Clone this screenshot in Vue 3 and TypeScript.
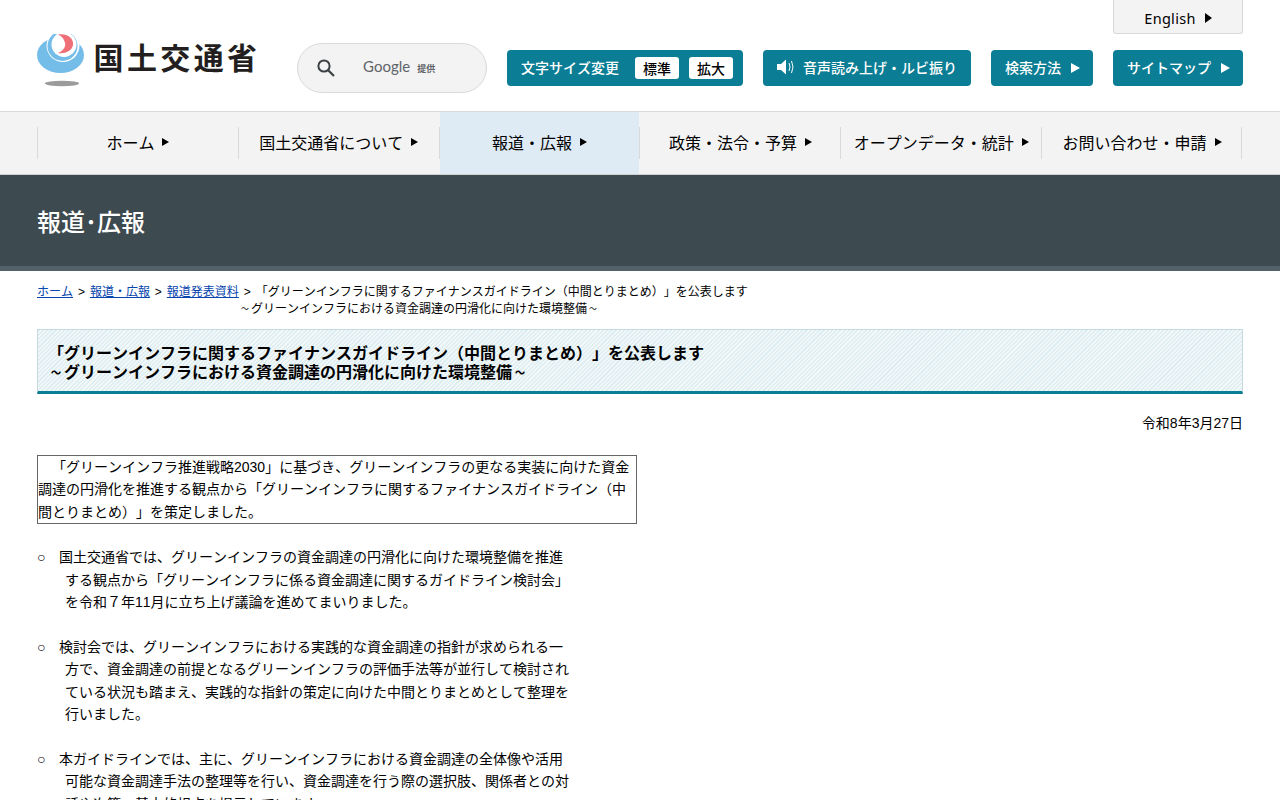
<script setup lang="ts">
const navItems = [
  { label: 'ホーム', active: false },
  { label: '国土交通省について', active: false },
  { label: '報道・広報', active: true },
  { label: '政策・法令・予算', active: false },
  { label: 'オープンデータ・統計', active: false },
  { label: 'お問い合わせ・申請', active: false },
]
const items = [
  ['国土交通省では、グリーンインフラの資金調達の円滑化に向けた環境整備を推進', 'する観点から「グリーンインフラに係る資金調達に関するガイドライン検討会」', 'を令和７年11月に立ち上げ議論を進めてまいりました。'],
  ['検討会では、グリーンインフラにおける実践的な資金調達の指針が求められる一', '方で、資金調達の前提となるグリーンインフラの評価手法等が並行して検討され', 'ている状況も踏まえ、実践的な指針の策定に向けた中間とりまとめとして整理を', '行いました。'],
  ['本ガイドラインでは、主に、グリーンインフラにおける資金調達の全体像や活用', '可能な資金調達手法の整理等を行い、資金調達を行う際の選択肢、関係者との対', '話や次第、基本的視点を提示しています。'],
]
</script>

<template>
  <div class="page" lang="ja">
    <header class="header">
      <div class="logo">
        <svg class="mark" width="48" height="53" viewBox="0 0 48 53" aria-hidden="true">
          <ellipse cx="23.5" cy="21" rx="23.5" ry="18" fill="#74bde9" />
          <circle cx="26" cy="11.5" r="16.5" fill="#fff" />
          <circle cx="25.5" cy="12" r="15" fill="#74bde9" />
          <circle cx="27" cy="10.5" r="12.5" fill="#fff" />
          <path d="M21 0.5 C30 -1 37 4 36 11 C35 17 28 20 21 19 C26 17 29 13 28 9 C27 5 25 2 21 0.5Z" fill="#ee6f77" />
          <ellipse cx="25" cy="49.5" rx="17" ry="2.7" fill="#9b9b9b" />
        </svg>
        <span class="logo-text">国土交通省</span>
      </div>

      <div class="search">
        <svg width="20" height="20" viewBox="0 0 20 20" aria-hidden="true">
          <circle cx="8" cy="8" r="5.6" fill="none" stroke="#3c4043" stroke-width="2" />
          <path d="M12.2 12.2 L18 18" stroke="#3c4043" stroke-width="2.2" />
        </svg>
        <span class="google">Google</span>
        <span class="provided">提供</span>
      </div>

      <div class="header-right">
        <a class="english">English<i class="arrow dark"></i></a>
        <div class="tools">
          <div class="tool size">
            <span>文字サイズ変更</span>
            <b class="chip first">標準</b>
            <b class="chip">拡大</b>
          </div>
          <a class="tool voice">
            <svg width="19" height="18" viewBox="0 0 19 18" aria-hidden="true">
              <path d="M1 6 H5 L10 1.5 V16.5 L5 12 H1Z" fill="#fff" />
              <path d="M13 5 Q15 9 13 13 M15.5 3 Q18.5 9 15.5 15" fill="none" stroke="#fff" stroke-width="1" />
            </svg>
            <span>音声読み上げ・ルビ振り</span>
          </a>
          <a class="tool method">検索方法<i class="arrow"></i></a>
          <a class="tool sitemap">サイトマップ<i class="arrow"></i></a>
        </div>
      </div>
    </header>

    <nav class="nav">
      <ul class="nav-list">
        <li v-for="item in navItems" :key="item.label" class="nav-item" :class="{ active: item.active }">
          <span class="nav-label">{{ item.label }}</span><i class="arrow dark small"></i>
        </li>
      </ul>
    </nav>

    <div class="band"><h2>報道･広報</h2></div>

    <main class="main">
      <div class="crumbs">
        <a href="#">ホーム</a> &gt; <a href="#">報道・広報</a> &gt; <a href="#">報道発表資料</a> &gt; 「グリーンインフラに関するファイナンスガイドライン（中間とりまとめ）」を公表します
        <span class="crumb-sub"><span class="tilde">～</span>グリーンインフラにおける資金調達の円滑化に向けた環境整備<span class="tilde">～</span></span>
      </div>

      <h1 class="title">「グリーンインフラに関するファイナンスガイドライン（中間とりまとめ）」を公表します<br /><span class="tilde">～</span>グリーンインフラにおける資金調達の円滑化に向けた環境整備<span class="tilde">～</span></h1>

      <p class="date">令和8年3月27日</p>

      <div class="lead">　「グリーンインフラ推進戦略2030」に基づき、グリーンインフラの更なる実装に向けた資金調達の円滑化を推進する観点から「グリーンインフラに関するファイナンスガイドライン（中間とりまとめ）」を策定しました。</div>

      <section class="points">
        <div v-for="(lines, i) in items" :key="i" class="point">
          <span class="bullet">○</span>
          <div class="point-text">
            <div v-for="(line, j) in lines" :key="j" :class="{ cont: j > 0 }">{{ line }}</div>
          </div>
        </div>
      </section>
    </main>
  </div>
</template>

<style>
html, body { margin: 0; background: #fff; overflow: hidden; }
</style>

<style scoped>
.page { width: 1280px; height: 800px; overflow: hidden; font-family: "Liberation Sans", "Noto Sans CJK JP", sans-serif; color: #000; text-spacing-trim: space-all; font-kerning: none; }
.tilde { display: inline-block; width: 1em; text-align: center; transform: scale(0.65, 0.8); }
.header { height: 111px; display: flex; padding-left: 37px; box-sizing: border-box; }
.logo { width: 260px; flex: none; display: flex; align-items: flex-start; padding-top: 34px; box-sizing: border-box; }
.mark { flex: none; margin-right: 8.5px; }
.logo-text { font-family: "Noto Sans CJK JP", sans-serif; font-size: 30px; line-height: 46px; letter-spacing: 3.4px; margin-top: -1px; color: #231f20; white-space: nowrap; font-weight: 700; }
.search { margin-top: 43px; width: 190px; height: 50px; box-sizing: border-box; border: 1px solid #d9d9d9; border-radius: 25px; background: #f3f3f3; display: flex; align-items: center; padding-left: 18px; flex: none; }
.google { font-family: "Lato", sans-serif; font-size: 15px; color: #5f6368; margin-left: 27px; margin-top: -4px; }
.provided { font-family: "Noto Sans CJK JP", sans-serif; font-size: 9px; font-weight: 700; color: #5f6368; margin-left: 7px; }
.header-right { flex: 1; padding-right: 37px; display: flex; flex-direction: column; align-items: flex-end; margin-left: 20px; }
.english { width: 130px; height: 34px; box-sizing: border-box; background: #f3f3f3; border: 1px solid #d9d9d9; border-top: 0; border-radius: 0 0 3px 3px; display: flex; align-items: center; justify-content: center; font-family: "Noto Sans", sans-serif; font-size: 14.5px; letter-spacing: 0.3px; color: #000; padding-top: 3px; }
.tools { display: flex; margin-top: 16px; font-family: "Noto Sans CJK JP", sans-serif; font-weight: 500; font-size: 14px; color: #fff; width: 736px; justify-content: space-between; }
.tool { height: 36px; background: #0b7d94; border-radius: 4px; display: flex; align-items: center; box-sizing: border-box; white-space: nowrap; padding-bottom: 2px; }
.size { width: 236px; padding-left: 14px; }
.chip { background: #fff; color: #000; border-radius: 3px; width: 44px; height: 22px; display: flex; align-items: center; justify-content: center; font-size: 14px; font-weight: 500; margin-left: 10px; margin-top: 2px; }
.chip.first { margin-left: 16px; }
.voice { width: 208px; padding-left: 13px; }
.voice span { margin-left: 8px; }
.method { width: 102px; padding-left: 14px; }
.sitemap { width: 130px; padding-left: 14px; }
.arrow { display: inline-block; width: 0; height: 0; border-left: 9px solid #fff; border-top: 5.5px solid transparent; border-bottom: 5.5px solid transparent; margin-left: 10px; margin-top: 2px; }
.arrow.dark { border-left-color: #000; border-left-width: 7px; border-top-width: 5px; border-bottom-width: 5px; margin-top: 0; }
.arrow.small { border-top-width: 4px; border-bottom-width: 4px; margin-left: 8px; }
.english .arrow { margin-left: 9px; }
.nav { height: 64px; box-sizing: border-box; background: #f3f3f3; border-top: 1px solid #d9d9d9; border-bottom: 1px solid #d0d0d0; padding: 0 38px 0 37px; }
.nav-list { list-style: none; margin: 0; padding: 0; display: flex; height: 100%; position: relative; }
.nav-list::after { content: ""; position: absolute; right: 0; top: 15px; height: 32px; border-left: 1px solid #d9d9d9; }
.nav-item { flex: 1; display: flex; align-items: center; justify-content: center; font-family: "Noto Sans CJK JP", sans-serif; font-size: 16px; white-space: nowrap; position: relative; color: #000; padding-bottom: 2px; box-sizing: border-box; }
.nav-label { margin-left: 1px; }
.nav-item::before { content: ""; position: absolute; left: 0; top: 15px; height: 32px; border-left: 1px solid #d9d9d9; }
.nav-item.active { background: linear-gradient(90deg, transparent 1px, #deebf5 1px); }
.band { height: 96px; box-sizing: border-box; background: #3d4a50; border-bottom: 5px solid #536268; padding: 28px 0 0 37px; }
.band h2 { margin: 0; font-family: "Noto Sans CJK JP", sans-serif; font-size: 24px; font-weight: 500; line-height: 36px; color: #fff; }
.main { padding: 0 37px; }
.crumbs { margin-top: 12px; font-size: 12px; line-height: 18px; width: 760px; white-space: nowrap; height: 35px; word-spacing: 1.6px; }
.crumbs a { color: #0645ad; text-decoration: underline; }
.crumb-sub { display: block; margin-left: 202px; margin-top: -1px; }
.title { margin: 11px 0 0; height: 65px; box-sizing: border-box; border: 1px solid #c5dadf; border-bottom: 3px solid #0b7d94; padding: 14px 10px 0; font-size: 16px; font-weight: 700; line-height: 19px; background: repeating-linear-gradient(135deg, #dfeef0 0 1.5px, #f2f8f9 1.5px 3px); }
.date { margin: 18px 0 0; text-align: right; font-size: 14px; line-height: 22px; }
.lead { margin-top: 21px; width: 600px; box-sizing: border-box; border: 1px solid #666; font-size: 14px; line-height: 22.4px; }
.points { margin-top: 22px; font-size: 14px; line-height: 22.4px; }
.point { display: flex; margin-bottom: 22.4px; white-space: nowrap; }
.bullet { width: 22px; flex: none; }
.cont { margin-left: 6px; }
</style>
